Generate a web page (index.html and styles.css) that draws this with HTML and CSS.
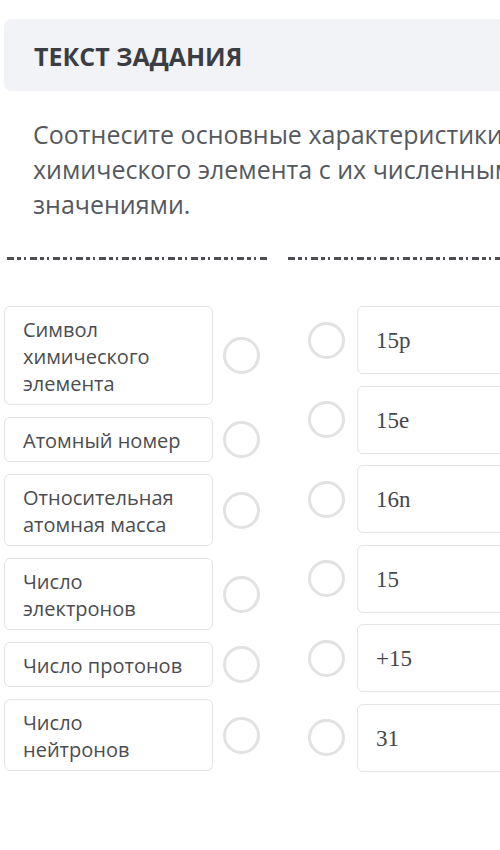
FILE: index.html
```html
<!DOCTYPE html>
<html>
<head>
    <link rel="stylesheet" href="styles.css">
</head>
<body>
    <div class="page">
        <div class="task-head">
            <h3 class="task-title">ТЕКСТ ЗАДАНИЯ</h3>
        </div>

        <p class="task-text">Соотнесите основные характеристики химического элемента с их численными значениями.</p>

        <!-- dashed separator, two halves -->
        <div class="divider">
            <div class="dash left"></div>
            <div class="dash right"></div>
        </div>

        <div class="match">
            <div class="col-left">
                <div class="pair">
                    <div class="card">Символ химического элемента</div>
                    <span class="dot"></span>
                </div>
                <div class="pair">
                    <div class="card">Атомный номер</div>
                    <span class="dot"></span>
                </div>
                <div class="pair">
                    <div class="card">Относительная атомная масса</div>
                    <span class="dot"></span>
                </div>
                <div class="pair">
                    <div class="card">Число электронов</div>
                    <span class="dot"></span>
                </div>
                <div class="pair">
                    <div class="card">Число протонов</div>
                    <span class="dot"></span>
                </div>
                <div class="pair">
                    <div class="card">Число нейтронов</div>
                    <span class="dot"></span>
                </div>
            </div>

            <div class="col-right">
                <div class="pair">
                    <span class="dot"></span>
                    <div class="card value">15p</div>
                </div>
                <div class="pair">
                    <span class="dot"></span>
                    <div class="card value">15e</div>
                </div>
                <div class="pair">
                    <span class="dot"></span>
                    <div class="card value">16n</div>
                </div>
                <div class="pair">
                    <span class="dot"></span>
                    <div class="card value">15</div>
                </div>
                <div class="pair">
                    <span class="dot"></span>
                    <div class="card value">+15</div>
                </div>
                <div class="pair">
                    <span class="dot"></span>
                    <div class="card value">31</div>
                </div>
            </div>
        </div>
    </div>
</body>
</html>
```

FILE: styles.css
```css
html, body {
    margin: 0;
    overflow: hidden;
    background: #ffffff;
}
body {
    font-family: "Open Sans", "Liberation Sans", sans-serif;
    color: #4a4d52;
}
.page {
    width: 620px;
    padding: 19px 0 0 4px;
}

/* Header block */
.task-head {
    background-color: #f2f3f6;
    border-radius: 7px;
    padding: 20px 30px 17px;
}
.task-title {
    margin: 0;
    font-size: 25px;
    line-height: 35px;
    font-weight: 700;
    color: #3a3d44;
}

.task-text {
    width: 545px;
    margin: 26px 0 0 29px;
    font-size: 25px;
    line-height: 35px;
    color: #55595f;
}

/* Dashed separator */
.divider {
    display: flex;
    gap: 20px;
    margin: 35px 0 0 3px;
}
.dash {
    height: 3px;
    background-image: repeating-linear-gradient(to right,
        #4d4f54 0 7px, transparent 7px 10px,
        #4d4f54 10px 14px, transparent 14px 17px,
        #4d4f54 17px 19px, transparent 19px 23px);
}
.dash.left {
    width: 261px;
}
.dash.right {
    width: 300px;
}

/* Matching columns */
.match {
    display: flex;
    gap: 48px;
    margin-top: 46px;
    align-items: flex-start;
}
.col-left, .col-right {
    display: flex;
    flex-direction: column;
}
.col-left {
    gap: 12px;
}
.col-right {
    gap: 11.5px;
}
.pair {
    display: flex;
    align-items: center;
}
.col-left .pair {
    gap: 10px;
}
.col-right .pair {
    gap: 12px;
}
.card {
    box-sizing: border-box;
    border: 1px solid #e2e3e5;
    border-radius: 6px;
    background: #ffffff;
}
.col-left .card {
    width: 209px;
    padding: 9px 18px 7px;
    font-size: 20px;
    line-height: 27px;
    color: #4b4d51;
}
.card.value {
    width: 220px;
    height: 68px;
    padding: 19px 18px 0;
    font-family: "Liberation Serif", "DejaVu Serif", serif;
    font-size: 23px;
    line-height: 30px;
    color: #45474b;
}
.dot {
    flex: none;
    box-sizing: border-box;
    width: 37px;
    height: 37px;
    border: 3px solid #e1e2e3;
    border-radius: 50%;
}
```
